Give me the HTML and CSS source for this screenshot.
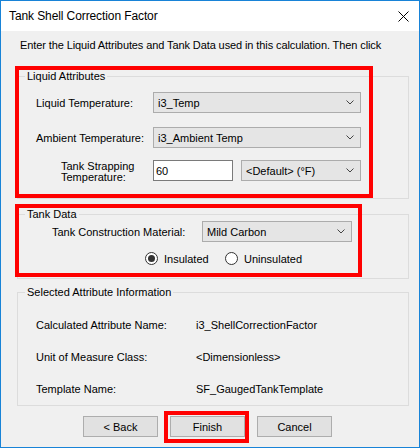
FILE: index.html
```html
<!DOCTYPE html>
<html>
<head>
<meta charset="utf-8">
<link rel="stylesheet" href="styles.css">
</head>
<body>
<div class="window">
  <div class="titlebar">
    <span class="title">Tank Shell Correction Factor</span>
    <svg class="close" width="11" height="11" viewBox="0 0 11 11"><path d="M0.5 0.5 L10.5 10.5 M10.5 0.5 L0.5 10.5" stroke="#000" stroke-width="1" fill="none"/></svg>
  </div>
  <div class="content">
    <p class="intro">Enter the Liquid Attributes and Tank Data used in this calculation. Then click</p>

    <fieldset class="group group-liquid">
      <legend>Liquid Attributes</legend>
      <div class="form-grid">
        <span class="label">Liquid Temperature:</span>
        <div class="combo combo-wide"><span>i3_Temp</span><svg class="chev" width="8" height="5" viewBox="0 0 8 5"><path d="M0.5 0.5 L4 4 L7.5 0.5" stroke="#444" fill="none"/></svg></div>
        <span class="label">Ambient Temperature:</span>
        <div class="combo combo-wide"><span>i3_Ambient Temp</span><svg class="chev" width="8" height="5" viewBox="0 0 8 5"><path d="M0.5 0.5 L4 4 L7.5 0.5" stroke="#444" fill="none"/></svg></div>
        <span class="label label-strap">Tank Strapping<br>Temperature:</span>
        <div class="strap-controls">
          <div class="textbox">60</div>
          <div class="combo combo-unit"><span>&lt;Default&gt; (°F)</span><svg class="chev" width="8" height="5" viewBox="0 0 8 5"><path d="M0.5 0.5 L4 4 L7.5 0.5" stroke="#444" fill="none"/></svg></div>
        </div>
      </div>
    </fieldset>

    <fieldset class="group group-tank">
      <legend>Tank Data</legend>
      <div class="material-row">
        <span class="label label-material">Tank Construction Material:</span>
        <div class="combo combo-material"><span>Mild Carbon</span><svg class="chev" width="8" height="5" viewBox="0 0 8 5"><path d="M0.5 0.5 L4 4 L7.5 0.5" stroke="#444" fill="none"/></svg></div>
      </div>
      <div class="radio-row">
        <span class="radio-item radio-first"><span class="radio checked"></span>Insulated</span>
        <span class="radio-item"><span class="radio"></span>Uninsulated</span>
      </div>
    </fieldset>

    <fieldset class="group group-info">
      <legend>Selected Attribute Information</legend>
      <div class="info-grid">
        <span>Calculated Attribute Name:</span><span>i3_ShellCorrectionFactor</span>
        <span>Unit of Measure Class:</span><span>&lt;Dimensionless&gt;</span>
        <span>Template Name:</span><span>SF_GaugedTankTemplate</span>
      </div>
    </fieldset>

    <div class="buttons">
      <button class="btn">&lt; Back</button>
      <button class="btn">Finish</button>
      <button class="btn">Cancel</button>
    </div>
  </div>

  <div class="mark mark-liquid"></div>
  <div class="mark mark-tank"></div>
  <div class="mark mark-finish"></div>
</div>
</body>
</html>
```

FILE: styles.css
```css
* { box-sizing: border-box; }
html, body { margin: 0; padding: 0; }
body {
  font-family: "Liberation Sans", Arial, sans-serif;
  font-size: 11px;
  color: #000;
  background: #fff;
}
.window {
  position: relative;
  width: 420px;
  height: 448px;
  border: 1px solid #1883d7;
  background: #f0f0f0;
  display: flex;
  flex-direction: column;
}
.titlebar {
  height: 30px;
  background: #fff;
  display: flex;
  align-items: center;
  justify-content: space-between;
  padding: 0 10px 0 8px;
  flex: none;
}
.title {
  font-size: 12px;
  color: #000;
  letter-spacing: -0.1px;
}
.close { display: block; }
.content {
  flex: 1;
  padding: 7px 10px 0 16px;
}
.intro {
  margin: 0;
  padding-left: 3px;
  line-height: 14px;
  height: 14px;
  white-space: nowrap;
  letter-spacing: -0.1px;
}
.group {
  margin: 17px 0 0 0;
  padding: 0;
  border: 1px solid #dcdcdc;
  min-width: 0;
}
.group legend {
  margin-left: 7px;
  padding: 0 2px;
  line-height: 14px;
}
.group-liquid {
  height: 130px;
  padding-top: 9px;
}
.form-grid {
  display: grid;
  grid-template-columns: 117px 208px;
  row-gap: 14px;
  align-items: center;
  padding-left: 18px;
}
.form-grid .label-strap {
  align-self: start;
  padding-left: 25px;
  line-height: 11px;
  margin-top: -1px;
}
.form-grid .strap-controls { margin-top: -4px; }
.combo {
  height: 21px;
  background: #e5e5e5;
  border: 1px solid #acacac;
  display: flex;
  align-items: center;
  justify-content: space-between;
  padding: 0 6px 0 4px;
}
.chev { display: block; }
.strap-controls {
  display: flex;
  gap: 8px;
}
.textbox {
  width: 80px;
  height: 21px;
  background: #fff;
  border: 1px solid #7a7a7a;
  display: flex;
  align-items: center;
  padding-left: 2px;
}
.combo-unit { width: 120px; }
.group-tank {
  margin-top: 8px;
  height: 72px;
  padding-top: 0;
}
.material-row {
  display: flex;
  align-items: center;
  padding-left: 34px;
}
.label-material { width: 150px; }
.combo-material { width: 150px; }
.radio-row {
  display: flex;
  align-items: center;
  padding-left: 127px;
  margin-top: 10px;
}
.radio-item {
  display: flex;
  align-items: center;
  gap: 6px;
}
.radio-first { width: 80px; }
.radio {
  width: 13px;
  height: 13px;
  border: 1px solid #333;
  border-radius: 50%;
  background: #fff;
  display: flex;
  align-items: center;
  justify-content: center;
}
.radio.checked::after {
  content: "";
  width: 7px;
  height: 7px;
  border-radius: 50%;
  background: #333;
}
.group-info {
  margin-top: 6px;
  height: 121px;
  padding-top: 10px;
}
.info-grid {
  display: grid;
  grid-template-columns: 160px auto;
  grid-auto-rows: 32px;
  align-items: center;
  padding-left: 18px;
}
.buttons {
  display: flex;
  gap: 12px;
  padding-left: 66px;
  margin-top: 10px;
}
.btn {
  width: 75px;
  height: 21px;
  background: #e1e1e1;
  border: 1px solid #adadad;
  font-family: "Liberation Sans", Arial, sans-serif;
  font-size: 11px;
  color: #000;
  padding: 0;
}
.mark {
  position: absolute;
  border: 4px solid #ff0000;
}
.mark-liquid { left: 14px; top: 65px; width: 358px; height: 132px; }
.mark-tank { left: 14px; top: 203px; width: 347px; height: 73px; }
.mark-finish { left: 163px; top: 410px; width: 85px; height: 32px; }
```
